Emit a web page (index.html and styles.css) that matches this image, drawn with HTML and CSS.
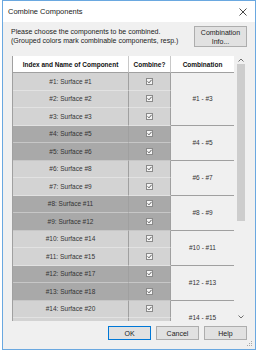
FILE: index.html
```html
<!DOCTYPE html>
<html lang="en">
<head>
  <meta charset="UTF-8">
  <title>Combine Components</title>
  <link rel="stylesheet" href="styles.css">
</head>
<body>

  <div class="window">
    <div class="titlebar">
      <span class="title">Combine Components</span>
      <svg class="close" width="8" height="8" viewBox="0 0 8 8">
        <path d="M0.5 0.5 L7.5 7.5 M7.5 0.5 L0.5 7.5" stroke="#333" stroke-width="0.9" fill="none"/>
      </svg>
    </div>

    <div class="content">
      <div class="intro">
        <p class="message">Please choose the components to be combined.<br>(Grouped colors mark combinable components, resp.)</p>
        <button class="btn info">Combination<br>Info...</button>
      </div>

      <div class="grid-wrap">
        <div class="grid" id="grid">
          <div class="head">Index and Name of Component</div>
          <div class="head">Combine?</div>
          <div class="head">Combination</div>
        </div>
        <div class="scrollbar">
          <svg class="arrow" width="6" height="4" viewBox="0 0 6 4">
            <path d="M0.5 3.5 L3 1 L5.5 3.5" stroke="#606060" stroke-width="0.9" fill="none"/>
          </svg>
          <div class="track"><div class="thumb"></div></div>
          <svg class="arrow" width="6" height="4" viewBox="0 0 6 4">
            <path d="M0.5 0.5 L3 3 L5.5 0.5" stroke="#606060" stroke-width="0.9" fill="none"/>
          </svg>
        </div>
      </div>

      <div class="actions">
        <button class="btn default">OK</button>
        <button class="btn">Cancel</button>
        <button class="btn">Help</button>
      </div>
    </div>

    <svg class="grip" width="6" height="6" viewBox="0 0 6 6">
      <rect x="4" y="0" width="1" height="1" fill="#a8a8a8"/>
      <rect x="2" y="2" width="1" height="1" fill="#a8a8a8"/>
      <rect x="4" y="2" width="1" height="1" fill="#a8a8a8"/>
      <rect x="0" y="4" width="1" height="1" fill="#a8a8a8"/>
      <rect x="2" y="4" width="1" height="1" fill="#a8a8a8"/>
      <rect x="4" y="4" width="1" height="1" fill="#a8a8a8"/>
    </svg>
  </div>

  <script>
    // [index, surface]; the last row is only partly scrolled into view
    const groups = [
      [[1, 1], [2, 2], [3, 3]],
      [[4, 5], [5, 6]],
      [[6, 8], [7, 9]],
      [[8, 11], [9, 12]],
      [[10, 14], [11, 15]],
      [[12, 17], [13, 18]],
      [[14, 20], [15, null]]
    ];

    const grid = document.getElementById("grid");

    groups.forEach((rows, g) => {
      const shade = g % 2 === 0 ? "light" : "dark";
      rows.forEach((row, i) => {
        const name = document.createElement("div");
        name.className = "cell name " + shade;
        if (row[1] !== null) {
          name.textContent = `#${row[0]}: Surface #${row[1]}`;
        }
        grid.appendChild(name);

        const check = document.createElement("div");
        check.className = "cell check " + shade;
        if (row[1] !== null) {
          check.innerHTML = '<span class="box"><svg width="5" height="5" viewBox="0 0 5 5"><path d="M0.6 2.4 L2 3.8 L4.6 0.8" stroke="#333" stroke-width="0.8" fill="none"/></svg></span>';
        }
        grid.appendChild(check);

        if (i === 0) {
          const combo = document.createElement("div");
          combo.className = "cell combo";
          combo.style.gridRow = "span " + rows.length;
          combo.textContent = `#${rows[0][0]} - #${rows[rows.length - 1][0]}`;
          grid.appendChild(combo);
        }
      });
    });
  </script>

</body>
</html>
```

FILE: styles.css
```css
body {
  margin: 0;
  font-family: 'Liberation Sans', Arial, sans-serif;
  background: #ffffff;
}

.window {
  position: relative;
  box-sizing: border-box;
  width: 254px;
  height: 350px;
  margin-left: 2px;
  border: 1px solid #6aa8e0;
  background: #f0f0f0;
  display: flex;
  flex-direction: column;
}

.titlebar {
  height: 22px;
  background: #ffffff;
  display: flex;
  align-items: center;
  justify-content: space-between;
  padding: 0 8px 0 5px;
}

.title {
  font-size: 7.5px;
  color: #222;
}

.content {
  flex: 1;
  display: flex;
  flex-direction: column;
  padding: 4px 8px 9px 9px;
}

.intro {
  display: flex;
  justify-content: space-between;
  align-items: flex-start;
  height: 30px;
}

.message {
  margin: 1px 0 0 -1px;
  font-size: 7px;
  line-height: 9px;
  color: #222;
}

.btn {
  box-sizing: border-box;
  font-family: 'Liberation Sans', Arial, sans-serif;
  font-size: 7px;
  color: #222;
  background: #e1e1e1;
  border: 1px solid #adadad;
  padding: 0;
}

.info {
  width: 53px;
  height: 21px;
  line-height: 9px;
}

.grid-wrap {
  display: flex;
  gap: 2px;
  height: 265px;
}

.grid {
  width: 222px;
  height: 265px;
  overflow: hidden;
  display: grid;
  grid-template-columns: 116px 42px 64px;
  grid-template-rows: 17px;
  grid-auto-rows: 17.5px;
  border-left: 1px solid #a0a0a0;
  box-sizing: border-box;
  font-size: 6.5px;
  color: #333;
}

.head {
  background: #ffffff;
  font-weight: bold;
  color: #111;
  display: flex;
  align-items: center;
  justify-content: center;
  border-right: 1px solid #c8c8c8;
  border-bottom: 1px solid #a0a0a0;
}

.cell {
  box-sizing: border-box;
  display: flex;
  align-items: center;
  justify-content: center;
  border-right: 1px solid #a0a0a0;
  border-bottom: 1px solid rgba(255, 255, 255, 0.35);
}

.light {
  background: #d3d3d3;
}

.dark {
  background: #a9a9a9;
}

.combo {
  background: #f0f0f0;
  border-bottom: 1px solid #a0a0a0;
}

.box {
  box-sizing: border-box;
  width: 7px;
  height: 7px;
  border: 1px solid #8a8a8a;
  background: #f4f4f4;
  display: flex;
  align-items: center;
  justify-content: center;
}

.box svg {
  display: block;
}

.scrollbar {
  width: 10px;
  display: flex;
  flex-direction: column;
  align-items: center;
  background: #f0f0f0;
}

.arrow {
  margin: 2px 0;
}

.track {
  flex: 1;
  width: 100%;
  padding: 0 1px;
  box-sizing: border-box;
}

.thumb {
  height: 157px;
  background: #cdcdcd;
}

.actions {
  display: flex;
  justify-content: flex-end;
  gap: 5px;
  margin-top: 5px;
}

.actions .btn {
  width: 43px;
  height: 14px;
}

.actions .default {
  border-color: #0078d7;
}

.grip {
  position: absolute;
  right: 2px;
  bottom: 2px;
}
```
